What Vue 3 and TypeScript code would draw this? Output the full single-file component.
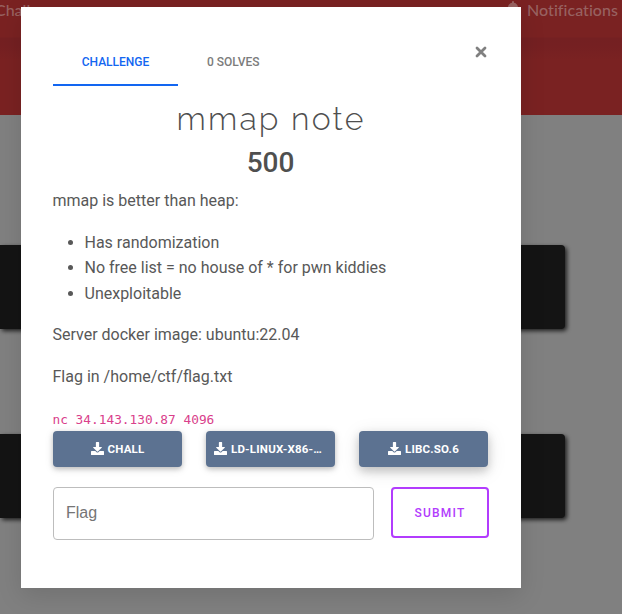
<script setup lang="ts">
import { ref } from 'vue'

interface DownloadFile {
  name: string
  raised?: boolean
  long?: boolean
}

const files: DownloadFile[] = [
  { name: 'chall' },
  { name: 'ld-linux-x86-…', long: true },
  { name: 'libc.so.6', raised: true },
]
const traits: string[] = [
  'Has randomization',
  'No free list = no house of * for pwn kiddies',
  'Unexploitable',
]
const flag = ref('')
</script>

<template>
  <div class="screen">
    <div class="page">
      <header class="banner">
        <span class="nav-left">Chall</span>
        <span class="nav-right">
          <svg class="bell" viewBox="0 0 448 512"><path fill="currentColor" d="M224 512c35 0 64-29 64-64H160c0 35 29 64 64 64zm215-150c-19-21-55-52-55-154 0-78-54-140-128-155V32a32 32 0 1 0-64 0v21C118 68 64 130 64 208c0 102-36 133-55 154-6 6-9 14-9 22 0 16 13 32 32 32h384c19 0 32-16 32-32 0-8-3-16-9-22z" /></svg>
          <span>Notifications</span>
        </span>
      </header>
      <div class="tiles">
        <div class="tile"></div>
        <div class="tile"></div>
      </div>
    </div>

    <div class="overlay">
      <section class="modal">
        <div class="top">
          <nav class="tabs">
            <a class="tab active">Challenge</a>
            <a class="tab">0 Solves</a>
          </nav>
          <button class="close" type="button" aria-label="Close">
            <svg viewBox="0 0 12 12"><path d="M2 2L10 10M10 2L2 10" /></svg>
          </button>
        </div>
        <h2 class="title">mmap note</h2>
        <h3 class="value">500</h3>
        <div class="desc">
          <p>mmap is better than heap:</p>
          <ul>
            <li v-for="trait in traits" :key="trait">{{ trait }}</li>
          </ul>
          <p>Server docker image: ubuntu:22.04</p>
          <p>Flag in /home/ctf/flag.txt</p>
          <code>nc 34.143.130.87 4096</code>
        </div>
        <div class="files">
          <a v-for="file in files" :key="file.name" class="file" :class="{ raised: file.raised, long: file.long }">
            <svg viewBox="0 0 512 512"><path fill="currentColor" d="M216 0h80c13 0 24 11 24 24v168h88c18 0 27 21 14 34L270 378c-7 7-20 7-27 0L90 226c-12-13-3-34 14-34h88V24c0-13 11-24 24-24zm296 376v112c0 13-11 24-24 24H24c-13 0-24-11-24-24V376c0-13 11-24 24-24h147l49 49c20 20 52 20 72 0l49-49h147c13 0 24 11 24 24z" /></svg>
            <span>{{ file.name }}</span>
          </a>
        </div>
        <form class="answer" @submit.prevent>
          <input v-model="flag" type="text" placeholder="Flag" />
          <button type="submit">Submit</button>
        </form>
      </section>
    </div>
  </div>
</template>

<style>
body {
  margin: 0;
  overflow: hidden;
}
</style>

<style scoped>
.screen {
  position: relative;
  width: 622px;
  height: 614px;
  overflow: hidden;
  box-sizing: border-box;
  font-family: Roboto, "Liberation Sans", sans-serif;
  color: #4f4f4f;
}
.screen * {
  box-sizing: border-box;
}
.page {
  height: 614px;
  background: #808080;
}
.banner {
  display: flex;
  justify-content: space-between;
  height: 115px;
  padding: 0 4px 0 0;
  background: linear-gradient(#7a2222 37px, #742022 38px, #752022 46px, #7a2222 60px);
  color: #976160;
  font: 500 16px/19px Lato, sans-serif;
}
.nav-left {
  margin-left: -5px;
}
.nav-right {
  display: flex;
  align-items: flex-start;
  gap: 7px;
}
.nav-right span {
  letter-spacing: 0.04px;
}
.bell {
  width: 14px;
  height: 16px;
  margin-top: 1px;
}
.tiles {
  display: flex;
  flex-direction: column;
  gap: 105px;
  padding-top: 130px;
}
.tile {
  width: 565px;
  height: 84px;
  border-radius: 0 4px 4px 0;
  background: #141414;
  box-shadow: 2px 2px 4px rgba(0, 0, 0, 0.75);
}
.overlay {
  position: absolute;
  inset: 0;
  padding: 7px 0 0 21px;
}
.modal {
  width: 500px;
  height: 581px;
  padding: 32px 32px 0;
  background: #fff;
  box-shadow: 0 8px 24px rgba(0, 0, 0, 0.12);
}
.top {
  display: flex;
  justify-content: space-between;
}
.tabs {
  display: flex;
}
.tab {
  height: 47px;
  padding: 0 29px;
  border-bottom: 2px solid transparent;
  color: #7c7c7c;
  font-size: 12px;
  font-weight: 500;
  line-height: 46px;
  text-transform: uppercase;
}
.tab.active {
  width: 125px;
  padding: 0;
  text-align: center;
  border-color: #1266f1;
  color: #1266f1;
}
.close {
  width: 16px;
  height: 16px;
  margin-top: 5px;
  padding: 2px;
  border: 0;
  background: none;
}
.close svg {
  display: block;
  width: 12px;
  height: 12px;
  fill: none;
  stroke: #808080;
  stroke-width: 2.8;
  stroke-linecap: round;
}
.title {
  margin: 14px 0 0;
  text-align: center;
  font: 300 32px/38px Raleway, Lato, sans-serif;
  letter-spacing: 2.2px;
}
.value {
  margin: 8px 1px 0 0;
  text-align: center;
  font-size: 28px;
  font-weight: 500;
  line-height: 34px;
}
.desc {
  margin-left: -0.5px;
  padding-top: 8px;
  color: #585858;
  font-size: 16px;
  line-height: 25.6px;
}
.desc p {
  margin: 0 0 16px;
}
.desc ul {
  margin: 0 0 16px;
  padding-left: 32px;
}
.desc code {
  display: block;
  height: 25px;
  color: #d9408b;
  font: 12.8px/28px "DejaVu Sans Mono", monospace;
}
.files {
  display: flex;
  gap: 24px;
}
.file {
  display: flex;
  align-items: center;
  justify-content: center;
  gap: 4px;
  width: 129px;
  height: 36px;
  border-radius: 4px;
  background: #5c7291;
  color: #fff;
  font-size: 11.5px;
  font-weight: 700;
  letter-spacing: 0.2px;
  text-transform: uppercase;
  white-space: nowrap;
  box-shadow: 0 2px 5px rgba(0, 0, 0, 0.2), 0 2px 10px rgba(0, 0, 0, 0.1);
}
.file.long {
  justify-content: flex-start;
  padding-left: 8px;
}
.file.raised {
  box-shadow: 0 4px 10px rgba(0, 0, 0, 0.2), 0 4px 20px rgba(0, 0, 0, 0.1);
}
.file svg {
  width: 13px;
  height: 13px;
}
.answer {
  display: flex;
  align-items: flex-start;
  gap: 17px;
  margin-top: 20px;
}
.answer input {
  width: 321px;
  height: 53px;
  padding: 0 13px 0 12px;
  border: 1px solid #bdbdbd;
  border-radius: 4px;
  font: 16px "Liberation Sans", sans-serif;
}
.answer input::placeholder {
  color: #757575;
}
.answer button {
  width: 98px;
  height: 51px;
  padding: 2px 0 0;
  border: 2px solid #b23cfd;
  border-radius: 4px;
  background: #fff;
  color: #b23cfd;
  font: 500 12px Roboto, sans-serif;
  letter-spacing: 1.2px;
  text-transform: uppercase;
}
</style>
